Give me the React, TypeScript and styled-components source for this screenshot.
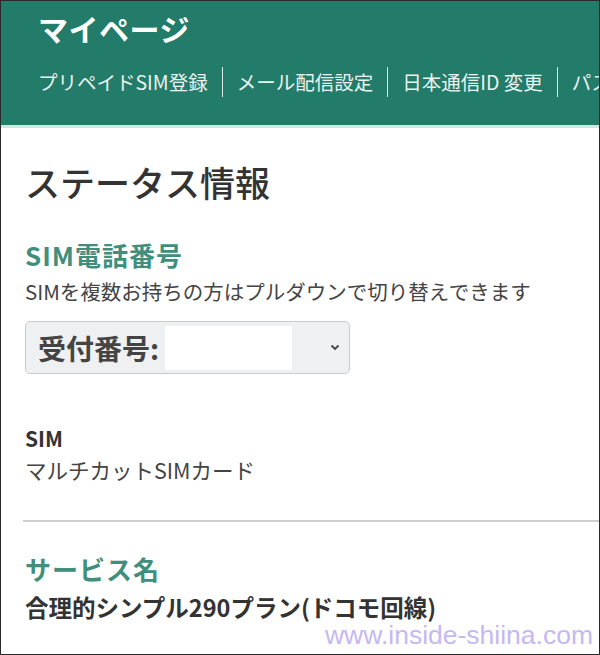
import React from "react";
import styled, { createGlobalStyle } from "styled-components";

const Global = createGlobalStyle`
  html, body { margin: 0; padding: 0; background: #fff; }
  body { font-family: "Noto Sans CJK JP", "Noto Sans", sans-serif; }
  * { box-sizing: border-box; }
`;

const Frame = styled.div`
  position: relative;
  width: 600px;
  height: 655px;
  border: 1px solid #2a2a2a;
  overflow: hidden;
  background: #fff;
`;

const Header = styled.header`
  background: #237b69;
  padding: 7px 0 28px 37px;
  border-bottom: 3px solid #d3e7e1;
  overflow: hidden;
`;

const Title = styled.h1`
  margin: 0;
  font-size: 30px;
  line-height: 40px;
  font-weight: 700;
  color: #fff;
  letter-spacing: 0.5px;
`;

const Nav = styled.nav`
  display: flex;
  margin-top: 19px;
  white-space: nowrap;
`;

const NavItem = styled.span<{ $first?: boolean }>`
  font-size: 19.5px;
  line-height: 30px;
  color: #e9f3f0;
  padding: 0 14px;
  padding-left: ${(p) => (p.$first ? "0" : "14px")};
  border-left: ${(p) => (p.$first ? "none" : "1px solid rgba(255,255,255,0.85)")};
`;

const Content = styled.main`
  padding: 0 0 0 24px;
`;

const PageTitle = styled.h2`
  margin: 32px 0 0;
  font-size: 35px;
  line-height: 44px;
  font-weight: 500;
  color: #333;
`;

const SectionTitle = styled.h3<{ $gap: number }>`
  margin: ${(p) => p.$gap}px 0 0;
  font-size: 26px;
  line-height: 32px;
  font-weight: 700;
  letter-spacing: 1px;
  color: #3f8f7c;
`;

const Text = styled.p<{ $gap: number; $size?: number }>`
  margin: ${(p) => p.$gap}px 0 0;
  font-size: ${(p) => p.$size ?? 20.5}px;
  line-height: 28px;
  color: #444;
`;

const Label = styled.h4<{ $gap: number; $size?: number }>`
  margin: ${(p) => p.$gap}px 0 0;
  font-size: ${(p) => p.$size ?? 21}px;
  line-height: 28px;
  font-weight: 700;
  color: #333;
`;

const Select = styled.div`
  margin-top: 16px;
  width: 325px;
  height: 53px;
  display: flex;
  align-items: center;
  padding: 0 12px 0 12px;
  background: #eff0f1;
  border: 1px solid #c9cbcd;
  border-radius: 5px;
`;

const SelectText = styled.span`
  font-size: 28px;
  font-weight: 700;
  color: #444;
  line-height: 1;
`;

const Redacted = styled.span`
  width: 127px;
  height: 44px;
  background: #fff;
  margin-left: 6px;
`;

const Chevron = styled.svg`
  margin-left: auto;
  margin-right: -3px;
`;

const Divider = styled.hr`
  margin: 36px 0 0 -2px;
  border: none;
  height: 2px;
  background: #cfcfcf;
`;

const Watermark = styled.div`
  position: absolute;
  right: 6px;
  bottom: 3px;
  font-family: "Liberation Sans", Arial, sans-serif;
  font-size: 26.5px;
  color: #c6b8f2;
`;

export default function App() {
  return (
    <>
      <Global />
      <Frame>
        <Header>
          <Title>マイページ</Title>
          <Nav>
            <NavItem $first>プリペイドSIM登録</NavItem>
            <NavItem>メール配信設定</NavItem>
            <NavItem>日本通信ID 変更</NavItem>
            <NavItem>パスワード変更</NavItem>
          </Nav>
        </Header>
        <Content>
          <PageTitle>ステータス情報</PageTitle>
          <SectionTitle $gap={35}>SIM電話番号</SectionTitle>
          <Text $gap={6}>SIMを複数お持ちの方はプルダウンで切り替えできます</Text>
          <Select>
            <SelectText>受付番号:</SelectText>
            <Redacted />
            <Chevron width="10" height="7" viewBox="0 0 10 7">
              <path d="M1.5 1.5 L5 5 L8.5 1.5" fill="none" stroke="#444" strokeWidth="1.8" />
            </Chevron>
          </Select>
          <Label $gap={50}>SIM</Label>
          <Text $gap={4} $size={21.5}>マルチカットSIMカード</Text>
          <Divider />
          <SectionTitle $gap={31}>サービス名</SectionTitle>
          <Label $gap={8} $size={23.5}>合理的シンプル290プラン(ドコモ回線)</Label>
        </Content>
        <Watermark>www.inside-shiina.com</Watermark>
      </Frame>
    </>
  );
}
